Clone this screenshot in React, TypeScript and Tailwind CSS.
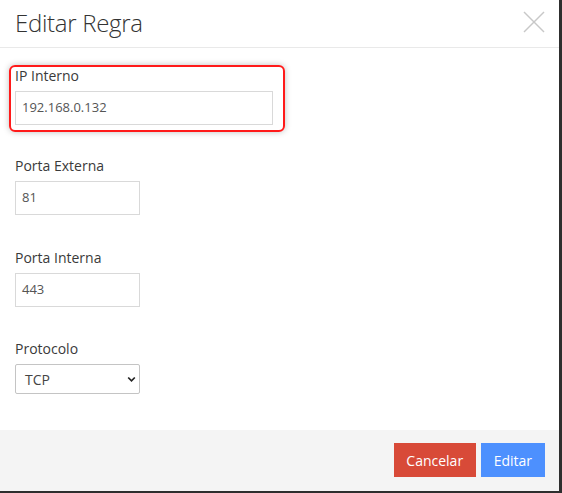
import React from "react";

const font = { fontFamily: '"Open Sans", "Noto Sans", sans-serif' };

export default function App() {
  return (
    <div className="w-[562px] h-[493px] bg-[#2e2e2e] overflow-hidden" style={font}>
      <div className="w-[559px] h-[491px] bg-white flex flex-col">
        {/* header */}
        <div className="h-[48px] shrink-0 border-b border-[#e9e9e9] flex items-center justify-between pl-[15px] pr-[15px]">
          <h1 className="text-[24px] leading-none text-[#333] font-light tracking-[-0.3px] -mt-[2px]">Editar Regra</h1>
          <svg width="22" height="22" viewBox="0 0 22 22" className="mr-[-1px] -mt-[4px]">
            <line x1="1" y1="1" x2="21" y2="21" stroke="#c8c8c8" strokeWidth="1.4" />
            <line x1="21" y1="1" x2="1" y2="21" stroke="#c8c8c8" strokeWidth="1.4" />
          </svg>
        </div>

        {/* body */}
        <div className="flex-1 px-[15px] pt-[18px]">
          <div className="relative w-[258px]">
            <div className="absolute left-[-6px] top-[-1px] right-[-12px] bottom-[-7px] border-2 border-[#ff1a1a] rounded-[6px] shadow-[0_0_6px_rgba(0,0,0,0.25)] pointer-events-none" />
            <label className="block text-[14px] leading-[20px] text-[#3a3a3a] mb-[5px]">IP Interno</label>
            <div className="h-[34px] border border-[#d9d9d9] flex items-center pl-[6px] text-[13px] text-[#555] bg-white">192.168.0.132</div>
          </div>

          <div className="mt-[31px] w-[125px]">
            <label className="block text-[14px] leading-[20px] text-[#3a3a3a] mb-[5px]">Porta Externa</label>
            <div className="h-[34px] border border-[#d9d9d9] flex items-center pl-[6px] text-[13px] text-[#555]">81</div>
          </div>

          <div className="mt-[33px] w-[125px]">
            <label className="block text-[14px] leading-[20px] text-[#3a3a3a] mb-[5px]">Porta Interna</label>
            <div className="h-[34px] border border-[#d9d9d9] flex items-center pl-[6px] text-[13px] text-[#555]">443</div>
          </div>

          <div className="mt-[32px] w-[125px]">
            <label className="block text-[14px] leading-[20px] text-[#3a3a3a] mb-[5px]">Protocolo</label>
            <div className="h-[30px] border border-[#c4c4c4] rounded-[2px] flex items-center justify-between pl-[9px] pr-[3px] text-[14px] text-[#444]">
              <span>TCP</span>
              <svg width="9" height="7" viewBox="0 0 9 7">
                <path d="M1.2 1.5 L4.5 4.8 L7.8 1.5" fill="none" stroke="#222" strokeWidth="1.7" />
              </svg>
            </div>
          </div>
        </div>

        {/* footer */}
        <div className="h-[61px] shrink-0 bg-[#f4f4f4] flex items-start justify-end gap-[5px] pt-[13px] pr-[14px]">
          <button className="h-[34px] px-[12.5px] bg-[#d84a38] text-white text-[14px]">Cancelar</button>
          <button className="h-[34px] px-[13px] bg-[#4d90fe] text-white text-[14px]">Editar</button>
        </div>
      </div>
    </div>
  );
}
